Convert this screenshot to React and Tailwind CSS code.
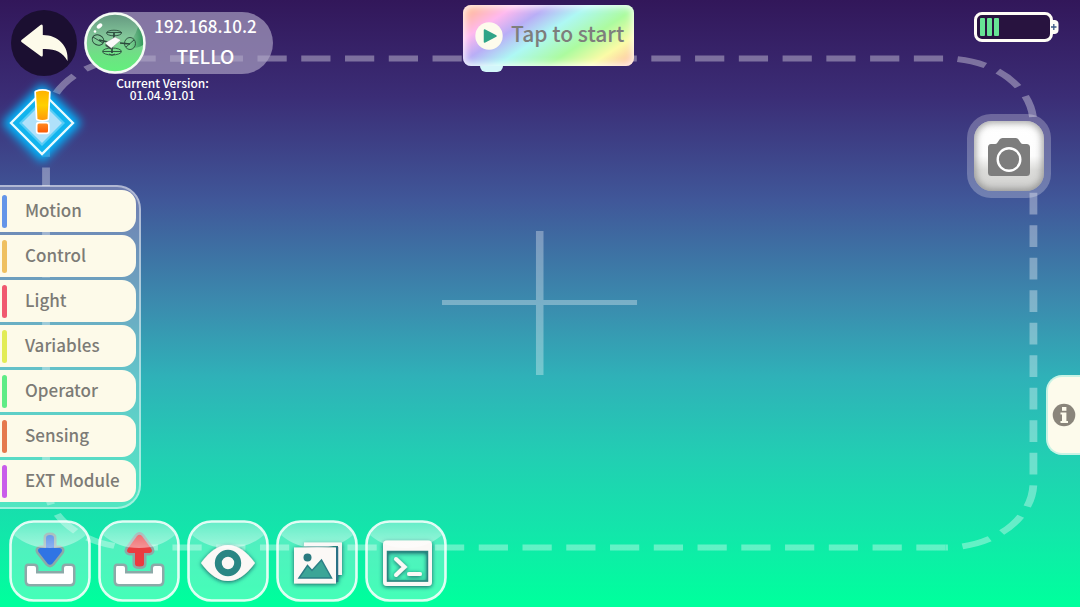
import React from "react";

const categories = [
  { name: "Motion", bar: "bg-[#6495e8]" },
  { name: "Control", bar: "bg-[#efc05f]" },
  { name: "Light", bar: "bg-[#f0596f]" },
  { name: "Variables", bar: "bg-[#e2ec56]" },
  { name: "Operator", bar: "bg-[#5fec86]" },
  { name: "Sensing", bar: "bg-[#e5794d]" },
  { name: "EXT Module", bar: "bg-[#c95cea]" },
];

/* Flight frame: dashed border and centre cross, stretched with the window. */
function FlightFrame() {
  return (
    <svg
      className="pointer-events-none absolute inset-0 h-full w-full"
      viewBox="0 0 802.4 607"
      preserveAspectRatio="none"
      aria-hidden="true"
    >
      <g opacity="0.35" fill="none" stroke="#fff" strokeWidth="5.8" strokeDasharray="21.7 10.81">
        <path d="M702.5 547.5H99.2A65 65 0 0 1 34.2 482.5V188" />
        <path d="M148.2 58.5H99.2A65 65 0 0 0 34.2 123.5V186" />
        <path d="M126.3 58.5H702.8A65 65 0 0 1 767.8 123.5V482.5A65 65 0 0 1 702.5 547.5" />
      </g>
      <path
        d="M398.2 231h5.6v69h69.5v5h-69.5v70h-5.6v-70h-69.8v-5h69.8z"
        fill="#fff"
        opacity="0.32"
      />
    </svg>
  );
}

function BackIcon() {
  return (
    <svg viewBox="0 0 66 66" className="size-full" aria-hidden="true">
      <path
        d="M10.500 30 29.500 15Q31.800 13.500 31.800 16.500V25C47 25 58 36 56.500 51C51.500 42 44 38.500 31.800 39V45Q31.800 47.500 29.500 46L10.500 32Q9.500 31 10.500 30Z"
        fill="#fdfbea"
      />
    </svg>
  );
}

function DroneBadge() {
  return (
    <svg viewBox="0 0 62 62" className="size-[62px] shrink-0" aria-hidden="true">
      <defs>
        <linearGradient id="orb" x1="0" y1="0" x2="0" y2="1">
          <stop offset="0" stopColor="#63967f" />
          <stop offset="0.4" stopColor="#83c79a" />
          <stop offset="0.7" stopColor="#6ee184" />
          <stop offset="1" stopColor="#62f07c" />
        </linearGradient>
        <linearGradient id="orbShade" x1="0" y1="0" x2="1" y2="0">
          <stop offset="0.3" stopColor="#2f8f55" stopOpacity="0" />
          <stop offset="1" stopColor="#1f8a4c" stopOpacity="0.8" />
        </linearGradient>
      </defs>
      <circle cx="31" cy="31" r="29.500" fill="url(#orb)" stroke="#f4fbf4" strokeWidth="2.500" />
      <path d="M54 15A28 28 0 0 1 59 33Q53 37 40 36Q50 28 54 15Z" fill="url(#orbShade)" />
      <ellipse cx="15.500" cy="14" rx="3.200" ry="2" transform="rotate(-40 15.500 14)" fill="#fff" />
      <circle cx="11" cy="19.500" r="1.300" fill="#fff" />
      <g fill="none" stroke="#2b4a3c" strokeWidth="0.900">
        <ellipse cx="30" cy="21" rx="7.500" ry="2.800" />
        <ellipse cx="14" cy="28" rx="6" ry="5" transform="rotate(25 14 28)" />
        <ellipse cx="46" cy="31.500" rx="5.500" ry="6" />
        <ellipse cx="28" cy="39.500" rx="9.500" ry="3.500" />
        <path d="M23 20.500H38M9 25 19 31M42 35 50 28M19 39.500H37" />
        <path d="M30 21V27M15 28 24 30M36 31 46 32M28 34V41" strokeWidth="1.700" />
        <path d="M25 42Q28 44.500 31 42" />
      </g>
      <path d="m21 31 10-6 6 3-10 8.500Z" fill="#fafafa" stroke="#7a857f" strokeWidth="0.400" />
      <path d="m21.500 32 5.500 4v1.500l-5.500-3.500Z" fill="#3f4a45" />
    </svg>
  );
}

function AlertIcon() {
  return (
    <svg viewBox="0 0 84 84" className="size-[84px] overflow-visible" aria-hidden="true">
      <defs>
        <filter id="glow" x="-60%" y="-60%" width="220%" height="220%">
          <feGaussianBlur stdDeviation="5" />
        </filter>
        <linearGradient id="bang" x1="0" y1="0" x2="0" y2="1">
          <stop offset="0" stopColor="#ffb300" />
          <stop offset="0.5" stopColor="#ffd000" />
          <stop offset="1" stopColor="#ff9a0a" />
        </linearGradient>
        <linearGradient id="bangDot" x1="0" y1="0" x2="0" y2="1">
          <stop offset="0" stopColor="#ff8a20" />
          <stop offset="1" stopColor="#fb5a04" />
        </linearGradient>
      </defs>
      <path
        d="M42 8 77 43 42 78 7 43Z"
        fill="#04b8ff"
        stroke="#04b8ff"
        strokeWidth="7"
        strokeLinejoin="round"
        filter="url(#glow)"
      />
      <path d="M42 12 73 43 42 74 11 43Z" fill="#12b4ee" stroke="#e9fbff" strokeWidth="2.300" />
      <path d="M42 20 65 43 42 66 19 43Z" fill="#59cdf6" />
      <path d="M42 23 62 43 42 63 22 43Z" fill="#b0e1fa" />
      <g stroke="#fff" strokeWidth="3.400" strokeLinejoin="round" paintOrder="stroke">
        <path d="M36 12Q42.500 9.500 49 12L47.500 39Q42.500 41 37.500 39Z" fill="url(#bang)" />
        <rect x="37.500" y="43.500" width="10.500" height="9" rx="1.500" fill="url(#bangDot)" />
      </g>
    </svg>
  );
}

function PlayIcon() {
  return (
    <svg viewBox="0 0 28 28" className="size-7 shrink-0" aria-hidden="true">
      <circle cx="14" cy="14" r="13.700" fill="#fdfbec" />
      <path d="M9.500 8V20L21 14Z" fill="#2fa488" stroke="#2fa488" strokeWidth="1.500" strokeLinejoin="round" />
    </svg>
  );
}

function CameraIcon() {
  return (
    <svg viewBox="0 0 44 40" className="h-10 w-11" aria-hidden="true">
      <path
        d="M4 7H8Q9.500 7 10.500 5.500L12.500 2.500Q13.500 1 15.500 1H28.500Q30.500 1 31.500 2.500L33.500 5.500Q34.500 7 36 7H39.500Q43 7 43 10.500V35.500Q43 39 39.500 39H4.500Q1 39 1 35.500V10.500Q1 7 4 7Z"
        fill="#7d7d7d"
      />
      <circle cx="22" cy="22.500" r="11.300" fill="none" stroke="#fff" strokeWidth="2.400" />
    </svg>
  );
}

function InfoIcon() {
  return (
    <svg viewBox="0 0 24 24" className="size-6" aria-hidden="true">
      <circle cx="12" cy="12" r="11.300" fill="#8a857b" />
      <rect x="10" y="4" width="4.400" height="3.800" fill="#fdfbec" />
      <path d="M8.500 9.500H14.400V18H16V20H8.500V18H10V11.500H8.500Z" fill="#fdfbec" />
    </svg>
  );
}

const tray = "M19 46H25Q27 46 27 48V53.500H55V48Q55 46 57 46H62Q64 46 64 48V61Q64 64 61 64H21Q18 64 18 61V48Q18 46 19 46Z";

function DownloadDrawing() {
  return (
    <g strokeLinejoin="round" stroke="#8ca9a8" strokeWidth="5" paintOrder="stroke">
      <path d={tray} fill="#fff" />
      <path d="M41 15Q45 15 45 18V28H51Q54 29 52.500 32L43.500 43.500Q41 46 38.500 43.500L29.500 32Q28 29 31 28H37V18Q37 15 41 15Z" fill="#2f74e4" />
    </g>
  );
}

function UploadDrawing() {
  return (
    <g strokeLinejoin="round" stroke="#8ca9a8" strokeWidth="5" paintOrder="stroke">
      <path d={tray} fill="#fff" />
      <path d="M39 16Q41.500 13.500 44 16L53.500 29Q55 32.500 51.500 33H46V44Q46 46.500 41.500 46.500T37 44V33H31.500Q28 32.500 29.500 29Z" fill="#ea3b40" />
    </g>
  );
}

function EyeDrawing() {
  return (
    <g filter="url(#tealShadow)">
      <path d="M14 43Q27 25 41 25T68 43Q55 61 41 61T14 43Z" fill="#fbf8f6" />
      <circle cx="41" cy="43" r="9.700" fill="none" stroke="#2b8684" strokeWidth="7" />
    </g>
  );
}

function GalleryDrawing() {
  return (
    <g filter="url(#tealShadow)">
      <path d="M28 22.500H66V55H62V26H28Z" fill="#f6f4f2" />
      <path d="M61 27V62" stroke="#2c6f86" strokeWidth="2.500" />
      <rect x="18" y="27.500" width="42" height="36" fill="#fbf8f6" />
      <circle cx="31.500" cy="37.500" r="4" fill="#2a7a80" />
      <path d="M23 58 31.500 45.500 36 50.500 45.500 40 55.500 58Z" fill="#3aa597" stroke="#2c7f86" strokeWidth="1.500" />
    </g>
  );
}

function TerminalDrawing() {
  return (
    <g filter="url(#tealShadow)">
      <path
        fillRule="evenodd"
        d="M22 20.500H63Q67 20.500 67 24.500V62Q67 66 63 66H22Q18 66 18 62V24.500Q18 20.500 22 20.500ZM22 31V61.500H63V31Z"
        fill="#fbf8f6"
      />
      <rect x="22.500" y="31.500" width="40" height="29.500" fill="none" stroke="#2c8580" strokeWidth="1.500" />
      <path d="M31 39 39.500 47 31 55M44 54H55" fill="none" stroke="#fbf8f6" strokeWidth="4" strokeLinecap="round" />
    </g>
  );
}

const tools = [
  { label: "Load", Drawing: DownloadDrawing },
  { label: "Save", Drawing: UploadDrawing },
  { label: "View", Drawing: EyeDrawing },
  { label: "Gallery", Drawing: GalleryDrawing },
  { label: "Console", Drawing: TerminalDrawing },
];

function ToolButton({ label, Drawing }) {
  return (
    <button type="button" aria-label={label} className="size-[82px]">
      <svg viewBox="0 0 82 82" className="size-full" aria-hidden="true">
        <defs>
          <filter id="tealShadow" x="-20%" y="-20%" width="140%" height="150%">
            <feDropShadow dx="0" dy="1" stdDeviation="2" floodColor="#125a66" floodOpacity="1" />
          </filter>
          <linearGradient id="shine" x1="0" y1="0" x2="0" y2="1">
            <stop offset="0" stopColor="#fff" stopOpacity="0.12" />
            <stop offset="1" stopColor="#fff" stopOpacity="0.45" />
          </linearGradient>
        </defs>
        <rect x="1.500" y="1.500" width="79" height="79" rx="23" fill="#fff" fillOpacity="0.27" stroke="#fff" strokeOpacity="0.85" strokeWidth="2.600" />
        <Drawing />
        <path d="M5 15Q11 3 24 3H58Q71 3 77 15Q62 28 41 28T5 15Z" fill="url(#shine)" />
      </svg>
    </button>
  );
}

function Battery() {
  return (
    <div role="img" aria-label="Battery level" className="flex items-center">
      <div className="flex h-[30px] w-[79px] items-stretch gap-0.5 rounded-lg border-[3px] border-[#fffdf6] bg-[#28133f] px-[3px] py-[3px]">
        <span className="w-[5px] rounded-[1px] bg-[#67e495]" />
        <span className="w-[5px] rounded-[1px] bg-[#67e495]" />
        <span className="w-[5px] rounded-[1px] bg-[#67e495]" />
      </div>
      <svg viewBox="0 0 6 14" className="h-3.5 w-1.5 overflow-visible" aria-hidden="true">
        <path d="M-1 0H2Q5.500 .5 5.500 4V10Q5.500 13.500 2 14H-1Z" fill="#fffdf6" />
        <path d="M-2 7H3.500M.8 4V10" stroke="#3e5a86" strokeWidth="1.300" />
      </svg>
    </div>
  );
}

export default function App() {
  return (
    <main className="relative grid min-h-screen grid-cols-[1fr_auto_1fr] overflow-hidden bg-[linear-gradient(180deg,#32175a_0%,#3b2d76_16%,#405799_33%,#3b8bae_50%,#2fb1b8_62%,#22ceb3_75%,#12e7aa_88%,#00ff9d_99%)] font-['Noto_Sans_CJK_SC','Noto_Sans',sans-serif] font-medium">
      <FlightFrame />

      <section className="relative flex flex-col items-start">
        <div className="grid h-[164px] grid-cols-[84px_auto]">
          <div className="flex flex-col">
            <button type="button" aria-label="Back" className="mt-2.5 ml-[11px] size-[66px] rounded-full bg-[#1b0f31]">
              <BackIcon />
            </button>
            <button type="button" aria-label="Warning" className="mt-1 size-[84px]">
              <AlertIcon />
            </button>
          </div>
          <div className="pt-3">
            <div className="flex h-[62px] w-[189px] items-center rounded-full bg-[#b0a8c8]/65 text-white">
              <DroneBadge />
              <div className="flex grow flex-col items-center pr-2 pb-1 leading-[30px]">
                <span className="text-[17px]">192.168.10.2</span>
                <span className="text-[19px]">TELLO</span>
              </div>
            </div>
            <p className="w-[157px] pt-[3px] text-center text-[12px] leading-3 text-white">
              Current Version:
              <br />
              01.04.91.01
            </p>
          </div>
        </div>

        <nav
          aria-label="Block categories"
          className="mt-[21px] w-[141px] rounded-r-[24px] border-y-2 border-r-2 border-white/45 bg-white/25 pt-[3px] pr-[3px] pb-[5px]"
        >
          <ul className="flex flex-col gap-[3px]">
            {categories.map((c) => (
              <li key={c.name}>
                <button
                  type="button"
                  className="flex h-[42px] w-full items-center gap-[18px] rounded-r-[14px] bg-[#fdfae9] pl-0.5 text-left text-[17px] leading-6 text-[#7c7b76]"
                >
                  <span className={`h-[33px] w-[5px] shrink-0 rounded-sm ${c.bar}`} />
                  <span className="pb-[3px] whitespace-nowrap">{c.name}</span>
                </button>
              </li>
            ))}
          </ul>
        </nav>

        <div className="mt-auto flex gap-[7px] pt-2.5 pb-[5px] pl-[9px]">
          {tools.map((t) => (
            <ToolButton key={t.label} {...t} />
          ))}
        </div>
      </section>

      <section className="relative pt-[5px] pl-4">
        <button
          type="button"
          className="relative flex h-[61px] w-[171px] items-center gap-2 rounded-lg bg-[linear-gradient(147deg,#ffb9a0_6%,#ffb9ee_20%,#b9aef6_33%,#aef8f4_48%,#acfb9f_67%,#fbfba6_83%,#ffb4a4_100%)] pl-3 text-[21px] whitespace-nowrap text-[#7e7e7c] shadow-[inset_0_0_7px_2px_#ffffffd0]"
        >
          <PlayIcon />
          <span className="pb-1">Tap to start</span>
          <span className="absolute top-full left-[17px] h-1.5 w-[23px] rounded-b-md bg-[#d3f6fa]" />
        </button>
      </section>

      <section className="relative flex flex-col items-end">
        <div className="mt-3 mr-[21px]">
          <Battery />
        </div>
        <button
          type="button"
          aria-label="Take photo"
          className="mt-[72px] mr-[29px] rounded-[24px] bg-white/25 p-[7px]"
        >
          <span className="flex size-[70px] items-center justify-center rounded-[18px] bg-[linear-gradient(180deg,#ffffff_0%,#fdfdfd_50%,#dcdcda_70%,#d0d0ce_100%)] pt-0.5 shadow-[inset_0_0_7px_2px_#777777aa]">
            <CameraIcon />
          </span>
        </button>
        <button
          type="button"
          aria-label="Information"
          className="mt-[177px] flex h-20 w-[34px] items-center justify-center rounded-l-[16px] border-y-2 border-l-2 border-[#c8f3e4] bg-[#fdfbec]"
        >
          <InfoIcon />
        </button>
      </section>
    </main>
  );
}
